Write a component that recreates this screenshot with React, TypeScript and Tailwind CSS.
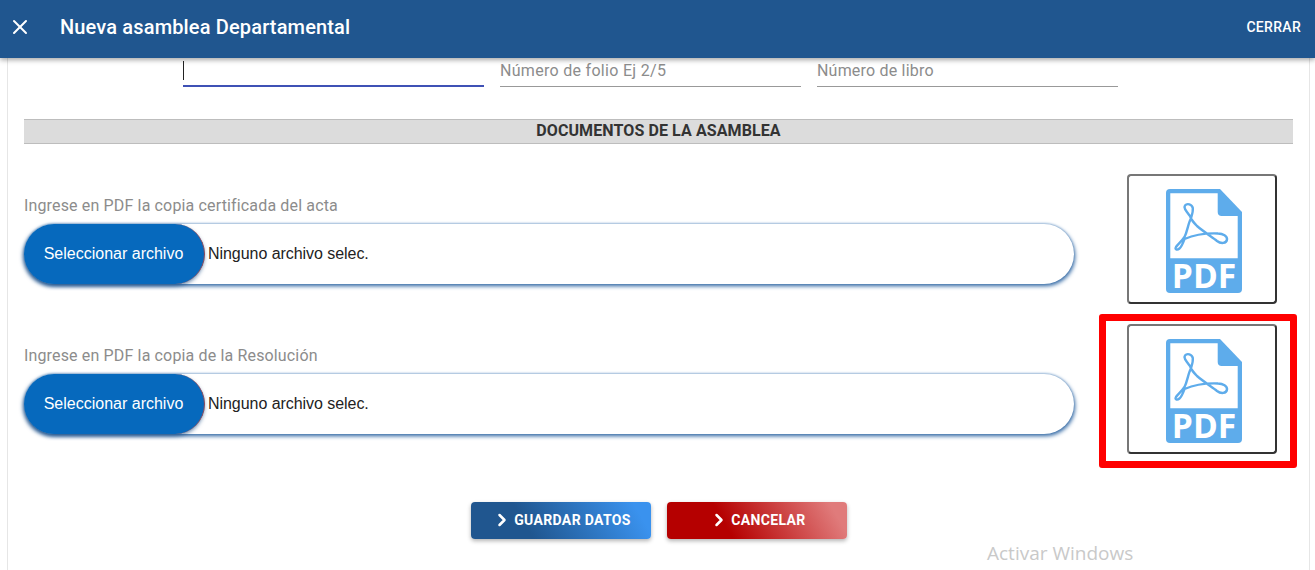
import { X, ChevronRight } from "lucide-react";

function PdfIcon() {
  return (
    <svg width="76" height="104" viewBox="0 0 76 104" fill="none" className="overflow-visible">
      <path d="M4 0H54L76 23V100a4 4 0 0 1-4 4H4a4 4 0 0 1-4-4V4a4 4 0 0 1 4-4Z" fill="#5eaceb" />
      <path d="M4.3 4.3H51.7V23q0 4 4 4H71.7V69.3H4.3Z" fill="#fff" />
      <path
        d="M24.7 30C22 35 21.5 42 18.5 48C16 52 12 55 10 58C8.5 60.5 11 61.5 13.5 59.5C16 57 17 54 18.5 50C28 46 40 44 52 44.5C57 44.5 61.5 47 61 50.5C60.5 54.5 55 55 51 52C46 48 38 43 31 37C27 33 25 30 24 27C21 23 17 19 19 16.5C21 14 26 15 26.8 19C27.3 23 25.5 27 24.7 30Z"
        stroke="#5eaceb"
        strokeWidth="2.4"
        strokeLinejoin="round"
      />
      <text x="38" y="99" textAnchor="middle" fill="#fff" fontFamily="'Open Sans', sans-serif" fontWeight="700" fontSize="33.6">
        PDF
      </text>
    </svg>
  );
}

function Thumb() {
  return (
    <div className="flex h-[130px] w-[150px] items-center justify-center rounded-[4px] border-2 border-t-[#777777] border-l-[#777777] border-r-[#333333] border-b-[#333333] bg-white pl-[4px] pt-[4px]">
      <PdfIcon />
    </div>
  );
}

function FilePill() {
  return (
    <div className="flex h-[60px] w-[1050px] items-center rounded-full bg-white shadow-[1px_2px_4px_#27609f,0_-1px_2px_#b8cfe6] font-['Liberation_Sans',sans-serif] text-base text-[#222222]">
      <span className="flex h-[60px] w-[181px] items-center justify-center rounded-full border-r border-[#8a4a5c] bg-[#0669bd] text-white shadow-[-1px_2px_4px_rgba(29,79,133,0.75)]">
        <span className="-ml-[1px]">Seleccionar archivo</span>
      </span>
      <span className="ml-[3px] -tracking-[0.05px]">Ninguno archivo selec.</span>
    </div>
  );
}

function Row({ label, mark, className }: { label: string; mark?: boolean; className?: string }) {
  return (
    <div className={`flex items-start ${className ?? ""}`}>
      <div className="flex w-[1103px] flex-col pt-[22px]">
        <span className="mb-[9px] h-[19px] text-base leading-[19px] tracking-[0.15px] text-[#8c8c8c]">{label}</span>
        <FilePill />
      </div>
      <div className="relative">
        <Thumb />
        {mark && (
          <div className="absolute -bottom-[14px] -left-[28px] -right-[20px] -top-[10px] rounded-[3px] border-[7px] border-[#ff0000]" />
        )}
      </div>
    </div>
  );
}

export default function App() {
  return (
    <div className="relative flex h-[570px] w-full flex-col overflow-hidden bg-white font-['Roboto',sans-serif]">
      <header className="relative z-10 flex h-[58px] shrink-0 items-center bg-[#20568f] pb-[5px] pl-[8px] pr-[14px] text-white shadow-[0_2px_5px_rgba(0,0,0,0.35)]">
        <X size={24} strokeWidth={2} className="mr-[28px]" />
        <span className="text-[20px] font-medium tracking-[0.15px]">Nueva asamblea Departamental</span>
        <span className="ml-auto text-sm font-medium tracking-[0.3px]">CERRAR</span>
      </header>

      <main className="ml-[7px] mr-[5px] flex-1 border-x border-[#e6e6e6] px-4">
        <div className="flex gap-4 pl-[159px]">
          <div className="relative h-[29px] w-[301px] border-b-2 border-[#3f51b5]">
            <span className="absolute left-0 top-[3px] h-[19px] w-px bg-[#222222]" />
          </div>
          <input
            readOnly
            placeholder="Número de folio Ej 2/5"
            className="h-[29px] w-[301px] border-b border-[#999999] pb-[3px] text-base tracking-[0.3px] outline-none placeholder:text-[#8c8c8c]"
          />
          <input
            readOnly
            placeholder="Número de libro"
            className="h-[29px] w-[301px] border-b border-[#999999] pb-[3px] text-base tracking-[0.2px] outline-none placeholder:text-[#8c8c8c]"
          />
        </div>

        <div className="mt-[32px] flex h-[25px] items-center justify-center border-y border-[#bdbdbd] bg-[#dcdcdc] pb-[2px] text-base font-bold tracking-[0.1px] text-[#333333]">
          DOCUMENTOS DE LA ASAMBLEA
        </div>

        <Row className="mt-[30px]" label="Ingrese en PDF la copia certificada del acta" />
        <Row className="mt-[20px]" label="Ingrese en PDF la copia de la Resolución" mark />

        <div className="mt-[48px] flex justify-center gap-4">
          <button className="flex h-[37px] w-[180px] items-center justify-center gap-[2px] rounded-[4px] bg-[linear-gradient(60deg,#20568f_31%,#3a92ee_91%)] pb-[2px] pl-[2px] text-sm font-bold tracking-[0.35px] text-white shadow-[0_2px_4px_rgba(0,0,0,0.3)]">
            <ChevronRight size={20} strokeWidth={3} />
            GUARDAR DATOS
          </button>
          <button className="flex h-[37px] w-[180px] items-center justify-center gap-[2px] rounded-[4px] bg-[linear-gradient(60deg,#b50000_33%,#e07b7b_91%)] pb-[2px] pl-[2px] text-sm font-bold tracking-[0.35px] text-white shadow-[0_2px_4px_rgba(0,0,0,0.3)]">
            <ChevronRight size={20} strokeWidth={3} />
            CANCELAR
          </button>
        </div>
      </main>

      <span className="absolute left-[987px] top-[539px] font-['Open_Sans',sans-serif] text-[19px] text-[#c9c9c9]">Activar Windows</span>
    </div>
  );
}
